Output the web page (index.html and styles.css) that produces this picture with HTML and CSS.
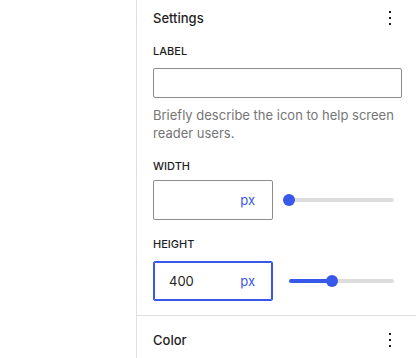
FILE: index.html
```html
<!DOCTYPE html>
<html lang="en">
<head>
<meta charset="utf-8">
<title>Settings</title>
<link rel="stylesheet" href="styles.css">
</head>
<body>
<div class="layout">
  <div class="canvas"></div>
  <aside class="sidebar">
    <section class="panel panel--settings">
      <div class="panel-header">
        <h2 class="panel-title">Settings</h2>
        <span class="kebab" aria-label="Options">
          <svg viewBox="0 0 24 24" width="24" height="24"><path d="M13 19h-2v-2h2v2zm0-6h-2v-2h2v2zm0-6h-2V5h2v2z"/></svg>
        </span>
      </div>

      <div class="field field--label">
        <div class="field-label">Label</div>
        <div class="text-input"></div>
        <p class="help">Briefly describe the icon to help screen reader users.</p>
      </div>

      <div class="field field--width">
        <div class="field-label">Width</div>
        <div class="unit-row">
          <div class="unit-input"><span class="unit-value"></span><span class="unit">px</span></div>
          <div class="range">
            <div class="track">
              <div class="fill" style="width:0%"></div>
              <div class="thumb" style="left:0%"></div>
            </div>
          </div>
        </div>
      </div>

      <div class="field field--height">
        <div class="field-label">Height</div>
        <div class="unit-row">
          <div class="unit-input unit-input--focus"><span class="unit-value">400</span><span class="unit">px</span></div>
          <div class="range">
            <div class="track">
              <div class="fill" style="width:41%"></div>
              <div class="thumb" style="left:41%"></div>
            </div>
          </div>
        </div>
      </div>
    </section>

    <section class="panel panel--color">
      <div class="panel-header panel-header--tall">
        <h2 class="panel-title">Color</h2>
        <span class="kebab" aria-label="Options">
          <svg viewBox="0 0 24 24" width="24" height="24"><path d="M13 19h-2v-2h2v2zm0-6h-2v-2h2v2zm0-6h-2V5h2v2z"/></svg>
        </span>
      </div>
    </section>
  </aside>
</div>
</body>
</html>
```

FILE: styles.css
```css
* { box-sizing: border-box; }

html, body {
  margin: 0;
  padding: 0;
  background: #fff;
}

body {
  font-family: Inter, "Noto Sans", "Liberation Sans", sans-serif;
  color: #1e1e1e;
  font-size: 13px;
}

.layout {
  display: flex;
  height: 358px;
  overflow: hidden;
}

.canvas {
  width: 136px;
  flex: none;
  background: #fff;
}

.sidebar {
  width: 280px;
  flex: none;
  border-left: 1px solid #e0e0e0;
  display: flex;
  flex-direction: column;
}

.panel {
  padding: 0 14px 14px 16px;
}

.panel--color {
  border-top: 1px solid #e0e0e0;
  padding-bottom: 0;
}

.panel-header {
  height: 36px;
  display: flex;
  align-items: center;
  justify-content: space-between;
}

.panel-header--tall {
  height: 48px;
}

.panel-title {
  margin: 0;
  font-size: 13px;
  font-weight: 500;
  line-height: 16px;
  color: #1e1e1e;
}

.kebab {
  display: flex;
  width: 24px;
  height: 24px;
  margin-right: 0;
}

.kebab svg {
  fill: #1e1e1e;
}

.field-label {
  font-size: 11px;
  font-weight: 500;
  line-height: 16px;
  text-transform: uppercase;
  color: #1e1e1e;
}

.field--label .field-label {
  margin-top: 7px;
  margin-bottom: 9px;
}

.text-input {
  height: 30px;
  border: 1px solid #8c8c8c;
  border-radius: 2px;
}

.help {
  margin: 8px 0 0;
  font-size: 13px;
  line-height: 18px;
  color: #757575;
}

.field--width .field-label {
  margin-top: 16px;
  margin-bottom: 6px;
}

.field--height .field-label {
  margin-top: 16px;
  margin-bottom: 9px;
}

.unit-row {
  display: flex;
  align-items: center;
}

.unit-input {
  width: 120px;
  height: 40px;
  flex: none;
  border: 1px solid #8c8c8c;
  border-radius: 2px;
  display: flex;
  align-items: center;
  justify-content: space-between;
  padding: 0 17px 0 15px;
  font-size: 13px;
}

.unit-input--focus {
  border-color: #3858e9;
  box-shadow: inset 0 0 0 1px #3858e9;
}

.unit-value {
  color: #1e1e1e;
}

.unit {
  color: #3858e9;
}

.range {
  flex: 1;
  padding: 0 8px 0 16px;
  height: 40px;
  display: flex;
  align-items: center;
}

.track {
  position: relative;
  width: 100%;
  height: 4px;
  border-radius: 2px;
  background: #ddd;
}

.fill {
  position: absolute;
  left: 0;
  top: 0;
  bottom: 0;
  background: #3858e9;
  border-radius: 2px;
}

.thumb {
  position: absolute;
  top: 50%;
  width: 12px;
  height: 12px;
  margin: -6px 0 0 -6px;
  border-radius: 50%;
  background: #3858e9;
}
```
